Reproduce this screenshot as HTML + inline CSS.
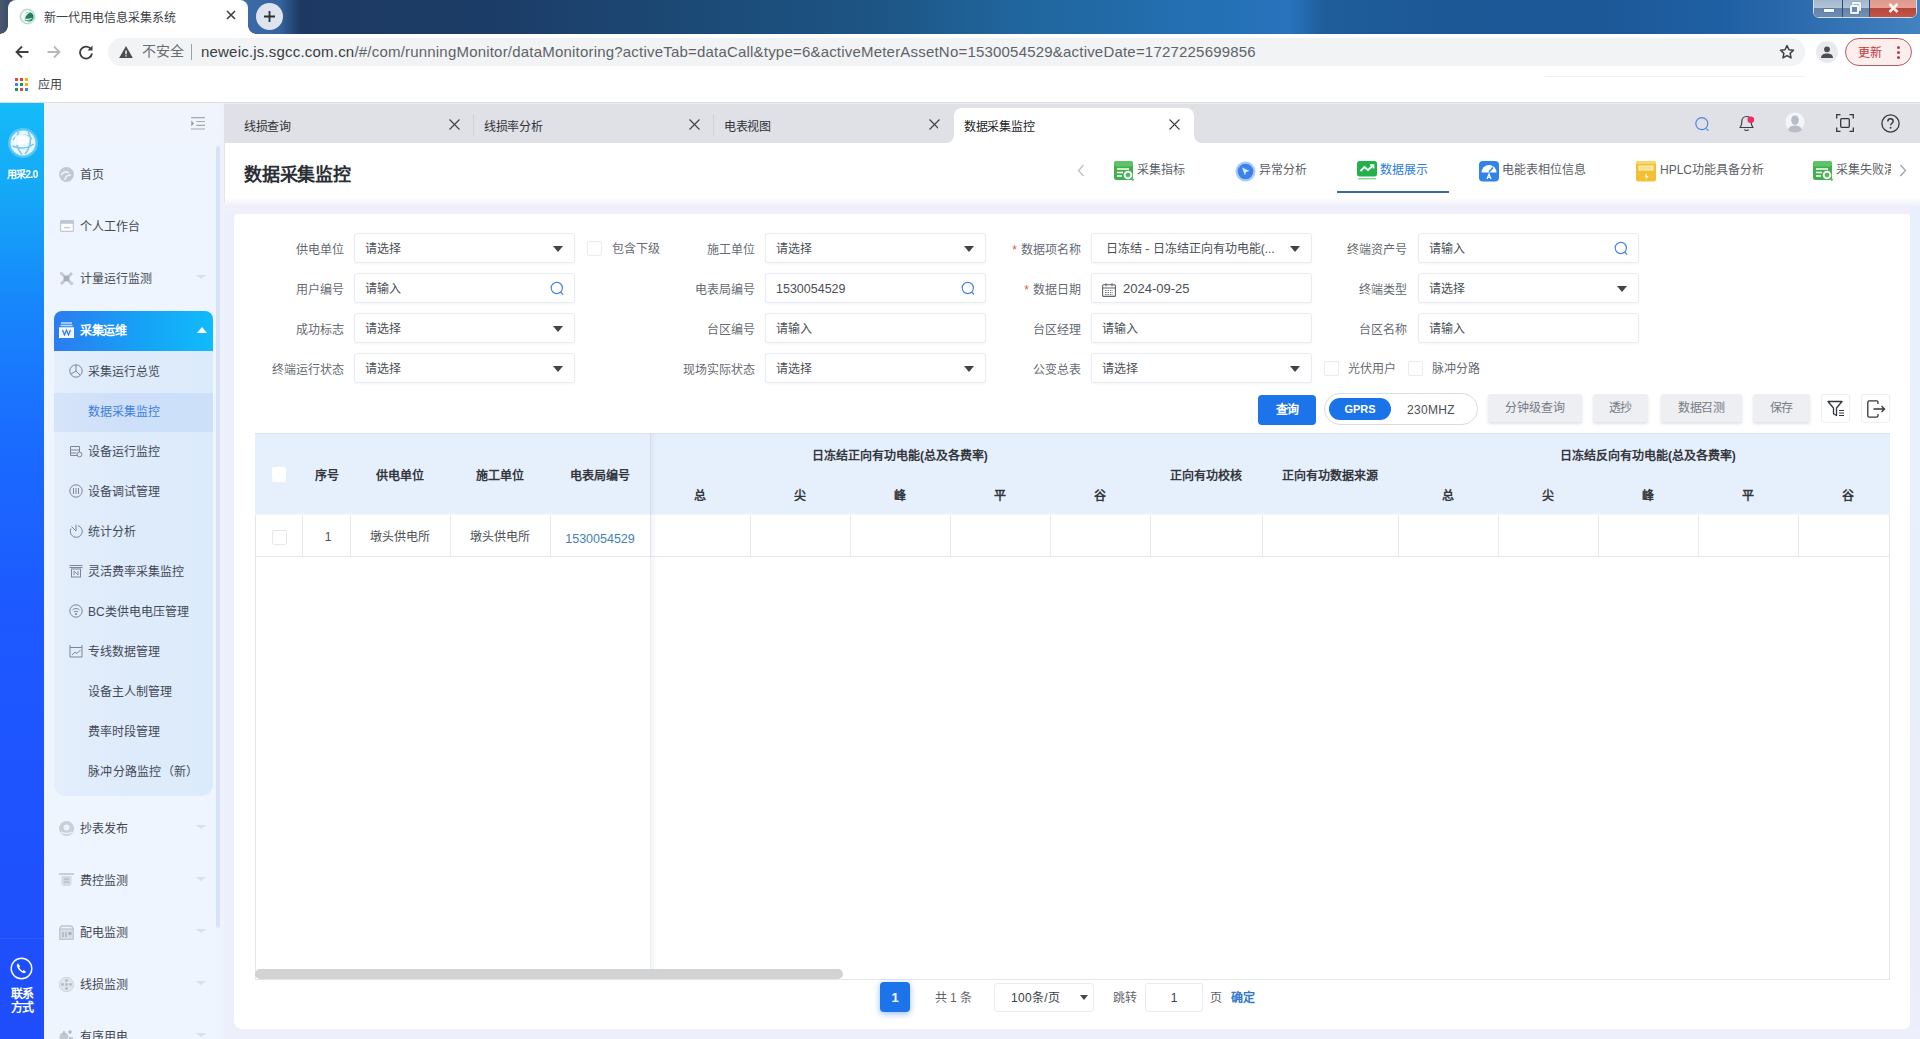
<!DOCTYPE html>
<html lang="zh-CN">
<head>
<meta charset="utf-8">
<title>新一代用电信息采集系统</title>
<style>
*{box-sizing:border-box;margin:0;padding:0}
body{position:absolute;left:0;top:0;line-height:1.2}
html,body{width:1920px;height:1039px;overflow:hidden;background:#fff;font-family:"Liberation Sans",sans-serif;font-size:12px;color:#4a4f57}
.abs{position:absolute}
#root{position:relative;width:1920px;height:1039px;overflow:hidden}
/* ---------- browser chrome ---------- */
#titlebar{left:0;top:0;width:1920px;height:34px;background:linear-gradient(90deg,#4a586e 0px,#3b4d6b 8px,#3c6aa6 250px,#35639e 280px,#1d3963 300px,#1b3c66 480px,#1c4672 640px,#1c4e7b 760px,#1d5585 880px,#20649b 1000px,#216aa6 1100px,#2470b4 1200px,#2873bc 1290px,#1e5d99 1325px,#1c5896 1450px,#1c5898 1600px,#1e5fa3 1720px,#2c6bad 1800px,#4282c0 1920px)}
#btab{left:8px;top:0;width:240px;height:34px;background:#fff;border-radius:8px 8px 0 0}
#btab .t{left:36px;top:11px;font-size:12px;color:#3c4043;white-space:nowrap;letter-spacing:0}
#newtab{left:256px;top:3px;width:27px;height:27px;border-radius:50%;background:#dde4ee}
#winctl{left:1813px;top:-1px;width:104px;height:19px;border:1px solid #d3deec;border-radius:0 0 6px 6px;overflow:hidden;background:#1d3357;box-shadow:0 0 0 1px rgba(20,40,80,.5) inset}
#addr{left:0;top:34px;width:1920px;height:34px;background:#fff}
#omni{left:108px;top:38px;width:1697px;height:28px;border-radius:14px;background:#f1f3f4}
#omni .u{left:93px;top:5px;font-size:15px;color:#5f6368;white-space:nowrap;letter-spacing:.2px}
#omni .u b{font-weight:normal;color:#3a3d42}
#bm{left:0;top:68px;width:1920px;height:34px;background:#fff}
/* ---------- app ---------- */
#rail{left:0;top:102px;width:44px;height:937px;background:linear-gradient(180deg,#14bcf8 0,#14a8f7 90px,#1787fb 200px,#1a6cff 330px,#1d58ff 520px,#1f4dfb 937px)}
#side{left:44px;top:102px;width:180px;height:937px;background:linear-gradient(180deg,#f1f4fb 0,#eff5fe 50px)}
#tabs{left:224px;top:102px;width:1696px;height:41px;background:#dfe1e6}
#head{left:224px;top:143px;width:1696px;height:60px;background:#fff}
#bg{left:224px;top:203px;width:1696px;height:836px;background:linear-gradient(180deg,#f0f1fa 0,#eff0fa 12px,#edeffb 40px)}
#card{left:234px;top:213.500px;width:1676px;height:815.500px;background:#fff;border-radius:4px 3px 6px 8px}

/* rail + side */
.lbl{left:0;width:44px;text-align:center;color:#fff;font-weight:bold;white-space:nowrap}
.mi{left:0;width:180px;height:20px}
.mi .tx{left:36px;top:4px;font-size:12px;color:#434954;white-space:nowrap;letter-spacing:0}
.mi .ar{left:152px;top:7px;width:0;height:0;border-left:5px solid transparent;border-right:5px solid transparent;border-top:4px solid #dadfea}
.si{left:10px;width:159px;height:40px}
.si .tx{left:34px;top:14px;font-size:12px;color:#434954;white-space:nowrap;letter-spacing:0}
.si svg{position:absolute;left:14.500px;top:13px}
/* tab strip */
.tb{top:18px;font-size:12px;color:#2f3237;white-space:nowrap;letter-spacing:-.3px}
.tx9{position:absolute;top:17px}
/* header nav */
.nv{top:20px;font-size:12px;color:#5b6068;white-space:nowrap;letter-spacing:0}

/* form */
.lb{width:120px;text-align:right;font-size:12px;color:#666b73;white-space:nowrap;letter-spacing:0;margin-top:1.5px;height:16px;line-height:16px}
.lb i{font-style:normal;color:#e5534b;margin-right:4px}
.ip{width:221px;height:30px;border:1px solid #e9ebf0;border-radius:3px;background:#fff;box-shadow:0 1px 2px rgba(120,130,160,.08)}
.ip .v{position:absolute;left:10px;top:7px;font-size:12px;color:#4b4f56;white-space:nowrap;letter-spacing:0;line-height:16px}
.ip .dn{position:absolute;right:11px;top:12px;width:0;height:0;border-left:5px solid transparent;border-right:5px solid transparent;border-top:6px solid #404349}
.ip .sr{position:absolute;right:9px;top:7px}
.cb{width:15px;height:15px;border:1px solid #e9ebf0;border-radius:2px;background:#fff}
.cl{font-size:12px;color:#666b73;white-space:nowrap;letter-spacing:0;margin-top:1px;line-height:16px}
.gb{top:394px;height:28px;border-radius:3px;background:#eeeff3;color:#767b84;font-size:12px;text-align:center;line-height:29px;letter-spacing:-.2px;box-shadow:0 2px 3px rgba(110,120,150,.22)}
.ib{top:394px;width:29px;height:29px;border:1px solid #eceef2;border-radius:3px;background:#fff}
/* table */
.th{font-size:12px;font-weight:bold;color:#33373d;white-space:nowrap;text-align:center;letter-spacing:-.05px;margin-top:.5px;line-height:16px}
.td{font-size:12px;color:#4b4f56;white-space:nowrap;text-align:center;letter-spacing:0;line-height:16px}
.vl{top:515px;width:1px;height:41px;background:#e7e9ed}
.pg{font-size:12px;color:#5f646c;white-space:nowrap;line-height:16px;letter-spacing:-.2px}
</style>
</head>
<body>
<div id="root">
<!-- ===== browser chrome ===== -->
<div id="titlebar" class="abs"></div>
<div class="abs" style="left:0;top:26px;width:8px;height:8px;background:radial-gradient(circle at 0 0,rgba(255,255,255,0) 7.500px,#fff 8px)"></div>
<div class="abs" style="left:248px;top:26px;width:8px;height:8px;background:radial-gradient(circle at 100% 0,rgba(255,255,255,0) 7.500px,#fff 8px)"></div>
<div id="btab" class="abs">
  <svg class="abs" style="left:11px;top:8px" width="17" height="17" viewBox="0 0 17 17"><circle cx="8.500" cy="8.500" r="8.200" fill="#dcefe9"/><circle cx="8.500" cy="8.500" r="7" fill="#f3faf7" stroke="#8cc9b8" stroke-width=".8"/><circle cx="9.800" cy="8.800" r="4.800" fill="#1f7d63"/><path d="M3 9.500c1.500-4 5-6 9-5-3 .5-5 2.500-6 6 2 .5 5 .3 7.500-1-1.500 3-6 4.500-10.500 0z" fill="#fff" opacity=".9"/><path d="M5.500 12c2.500 1 5.500.5 7.500-1.500" stroke="#57b39a" stroke-width=".9" fill="none"/></svg>
  <div class="abs t">新一代用电信息采集系统</div>
  <svg class="abs" style="left:218px;top:10px" width="10" height="10" viewBox="0 0 10 10"><path d="M1 1l8 8M9 1l-8 8" stroke="#3c4043" stroke-width="1.6"/></svg>
</div>
<div id="newtab" class="abs"><svg class="abs" style="left:7px;top:7px" width="13" height="13" viewBox="0 0 13 13"><path d="M6.500 1v11M1 6.500h11" stroke="#2b2f36" stroke-width="1.8"/></svg></div>
<div id="winctl" class="abs">
  <div class="abs" style="left:0;top:0;width:28px;height:17px;background:linear-gradient(180deg,#a3b7cf 0,#b3c4d8 46%,#6483a8 48%,#6f8db0 100%)"></div>
  <div class="abs" style="left:29px;top:0;width:26px;height:17px;background:linear-gradient(180deg,#a3b7cf 0,#b3c4d8 46%,#6483a8 48%,#7391b3 100%)"></div>
  <div class="abs" style="left:56px;top:0;width:46px;height:17px;background:linear-gradient(180deg,#de9a8f 0,#e5a294 46%,#b9443a 48%,#c4564a 100%)"></div>
  <div class="abs" style="left:28px;top:0;width:1px;height:17px;background:#2b4a74"></div>
  <div class="abs" style="left:55px;top:0;width:1px;height:17px;background:#2b4a74"></div>
  <div class="abs" style="left:10px;top:9px;width:10px;height:3px;background:#f4f8fc;box-shadow:0 0 1px #1b2c44"></div>
  <div class="abs" style="left:38px;top:2px;width:9px;height:9px;border:2px solid #f4f8fc;border-radius:1px;box-shadow:0 0 1px #1b2c44"></div>
  <div class="abs" style="left:36px;top:5px;width:9px;height:9px;border:2px solid #f4f8fc;border-radius:1px;background:#6b8ab0;box-shadow:0 0 1px #1b2c44"></div>
  <svg class="abs" style="left:74px;top:3px" width="11" height="10" viewBox="0 0 11 10"><path d="M1.500 1l8 8M9.500 1l-8 8" stroke="#fbf3ef" stroke-width="2.600"/></svg>
</div>
<div id="addr" class="abs">
  <svg class="abs" style="left:14px;top:10px" width="16" height="16" viewBox="0 0 16 16"><path d="M14.500 8H2.500M8 2.500L2.500 8 8 13.500" stroke="#3c4043" stroke-width="1.8" fill="none"/></svg>
  <svg class="abs" style="left:46px;top:10px" width="16" height="16" viewBox="0 0 16 16"><path d="M1.500 8h12M8 2.500L13.500 8 8 13.500" stroke="#b4b7bb" stroke-width="1.8" fill="none"/></svg>
  <svg class="abs" style="left:78px;top:10px" width="16" height="16" viewBox="0 0 16 16"><path d="M13.200 5.500A6 6 0 1 0 14 9.300" stroke="#3c4043" stroke-width="1.8" fill="none"/><path d="M14.500 1.500v5h-5z" fill="#3c4043"/></svg>
</div>
<div id="omni" class="abs">
  <svg class="abs" style="left:11px;top:8px" width="14" height="12.250" viewBox="0 0 16 14"><path d="M8 0l8 14H0z" fill="#4a4d52"/><path d="M7.200 5h1.600v4.500H7.200zM7.200 10.500h1.600v1.600H7.200z" fill="#fff"/></svg>
  <div class="abs" style="left:34px;top:5px;font-size:14px;color:#686b70;white-space:nowrap">不安全</div>
  <div class="abs" style="left:83px;top:6px;width:1px;height:16px;background:#9aa0a6"></div>
  <div class="abs u"><b>neweic.js.sgcc.com.cn</b>/#/com/runningMonitor/dataMonitoring?activeTab=dataCall&amp;type=6&amp;activeMeterAssetNo=1530054529&amp;activeDate=1727225699856</div>
  <svg class="abs" style="left:1671px;top:6px" width="16" height="16" viewBox="0 0 16 16"><path d="M8 1.600l1.950 4.200 4.550.5-3.400 3.100.95 4.500L8 11.600l-4.050 2.300.95-4.500-3.400-3.100 4.550-.5z" stroke="#3c4043" stroke-width="1.500" fill="none" stroke-linejoin="round"/></svg>
</div>
<div class="abs" style="left:1816px;top:41px;width:22px;height:22px;border-radius:50%;background:#e8eaed"><svg class="abs" style="left:4px;top:4px" width="14" height="14" viewBox="0 0 14 14"><circle cx="7" cy="4.300" r="2.900" fill="#4a4d52"/><path d="M1 13c0-3.500 3-4.600 6-4.600s6 1.100 6 4.600z" fill="#4a4d52"/></svg></div>
<div class="abs" style="left:1845px;top:38px;width:67px;height:28px;border-radius:14px;border:1px solid #b9595d;background:#fdeeee">
  <div class="abs" style="left:12px;top:6.500px;font-size:12px;color:#c0353a;white-space:nowrap">更新</div>
  <div class="abs" style="left:51px;top:7px;width:3px;height:3px;border-radius:50%;background:#b0404a;box-shadow:0 5px 0 #b0404a,0 10px 0 #b0404a"></div>
</div>
<div id="bm" class="abs">
  <svg class="abs" style="left:15px;top:10px" width="13" height="13" viewBox="0 0 13 13"><g><rect x="0" y="0" width="3" height="3" fill="#e8453c"/><rect x="5" y="0" width="3" height="3" fill="#e8453c"/><rect x="10" y="0" width="3" height="3" fill="#f4b400"/><rect x="0" y="5" width="3" height="3" fill="#4285f4"/><rect x="5" y="5" width="3" height="3" fill="#0f9d58"/><rect x="10" y="5" width="3" height="3" fill="#f4b400"/><rect x="0" y="10" width="3" height="3" fill="#0f9d58"/><rect x="5" y="10" width="3" height="3" fill="#e8453c"/><rect x="10" y="10" width="3" height="3" fill="#4285f4"/></g></svg>
  <div class="abs" style="left:38px;top:10px;font-size:12px;color:#3c4043;white-space:nowrap">应用</div>
  <div class="abs" style="left:1545px;top:8px;width:260px;height:1px;background:#eef0f2"></div>
</div>
<!-- ===== app ===== -->
<div class="abs" style="left:0;top:101.500px;width:1920px;height:1px;background:#dcdee2;z-index:5"></div>
<div id="rail" class="abs"></div>
<div id="side" class="abs"></div>
<div id="tabs" class="abs"></div>
<div id="head" class="abs"></div>
<div id="bg" class="abs"></div>
<div class="abs" style="left:224px;top:143px;width:1px;height:60px;background:#e3e4e9"></div>
<div class="abs" style="left:225px;top:198px;width:1695px;height:10px;background:linear-gradient(180deg,#fff 0,#f7f7fd 4px,#eeeffa 9px,#eff0fa 10px)"></div>
<div class="abs" style="left:1910px;top:207px;width:10px;height:822px;background:linear-gradient(180deg,#e9f0fd,#e9eefb 60%,#eceefa)"></div>
<div class="abs" style="left:224px;top:213px;width:10px;height:816px;background:#ebf0fc"></div>
<div id="card" class="abs"></div>

<!-- rail -->
<div class="abs" style="left:0;top:102px;width:44px;height:937px">
  <svg class="abs" style="left:7px;top:25px" width="32" height="32" viewBox="0 0 32 32"><circle cx="16" cy="16" r="15" fill="#8fd6f8" opacity=".55"/><circle cx="16" cy="16" r="12.500" fill="#e9f7fd"/><path d="M6 13c4-6 14-7 19-1M5.500 19c6 3 15 3 21-2M12 4.500c-4 7-3 16 3 23M21 5c4 6 3 15-3 22" stroke="#7fc6ee" stroke-width="1.600" fill="none"/><path d="M9 9c5-3 11-2 14 2-2 6-9 9-15 6-1-3-.5-6 1-8z" fill="#fff" opacity=".85"/></svg>
  <div class="abs lbl" style="top:67px;font-size:10px;letter-spacing:-.6px">用采2.0</div>
  <div class="abs" style="left:0;top:836px;width:44px;height:1px;background:#3a66ff;opacity:.6"></div>
  <svg class="abs" style="left:10px;top:855px" width="23" height="23" viewBox="0 0 23 23"><circle cx="11.500" cy="11.500" r="10.300" stroke="#fff" stroke-width="1.400" fill="none"/><path d="M8 6.500c-1.200.6-1.500 2-.8 3.600 1 2.300 3 4.500 5.300 5.600 1.600.7 2.900.4 3.500-.8l-2.200-1.800-1.300.9c-1.300-.7-2.600-2-3.300-3.400l.9-1.300z" fill="#fff"/></svg>
  <div class="abs lbl" style="top:886px;font-size:12px;line-height:13.500px;letter-spacing:-.5px">联系<br>方式</div>
</div>
<!-- side -->
<div class="abs" style="left:44px;top:102px;width:180px;height:937px;overflow:hidden">
  <div class="abs" style="left:172px;top:44px;width:4px;height:782px;border-radius:2px;background:#d9e3f8"></div>
  <div class="abs" style="left:176px;top:0;width:4px;height:937px;background:#edf2fd"></div>
  <svg class="abs" style="left:147px;top:14.500px" width="14" height="13" viewBox="0 0 14 13"><path d="M0 .7h14M5.300 4.500h8.700M5.300 8.300h8.700M0 12h14" stroke="#a3a8b3" stroke-width="1.200"/><path d="M.3 3.600l2.700 2.800-2.700 2.800z" fill="#8f949f"/></svg>
  <!-- top-level items -->
  <div class="abs mi" style="top:62px"><svg class="abs" style="left:15px;top:3px" width="15" height="15" viewBox="0 0 15 15"><circle cx="7.500" cy="7.500" r="7.500" fill="#c3c8d2"/><path d="M2 8c2-3 5-4 8-2M6 13c0-3 2-5 6-5" stroke="#eef1f6" stroke-width="1.500" fill="none"/></svg><div class="abs tx">首页</div></div>
  <div class="abs mi" style="top:114px"><svg class="abs" style="left:16px;top:4px" width="14" height="12" viewBox="0 0 14 12"><rect x=".6" y=".6" width="12.800" height="10.800" rx="1" fill="#fff" stroke="#c1c6d1" stroke-width="1.200"/><rect x=".6" y=".6" width="12.800" height="3.200" fill="#c1c6d1"/><path d="M4 7.600h6" stroke="#c1c6d1" stroke-width="1.400"/></svg><div class="abs tx">个人工作台</div></div>
  <div class="abs mi" style="top:166px"><svg class="abs" style="left:15px;top:3px" width="15" height="15" viewBox="0 0 15 15"><path d="M2 2l11 11M13 2L2 13" stroke="#bfc4cf" stroke-width="2.600"/><circle cx="7.500" cy="7.500" r="3" fill="#a8aebb"/><circle cx="2.500" cy="2.500" r="1.800" fill="#c9ced8"/><circle cx="12.500" cy="12.500" r="1.800" fill="#c9ced8"/></svg><div class="abs tx">计量运行监测</div><div class="abs ar"></div></div>
  <!-- active group -->
  <div class="abs" style="left:10px;top:249px;width:159px;height:445px;border-radius:0 0 12px 12px;background:linear-gradient(90deg,#e4eefc,#deebfb 50%,#dcebfb)"></div>
  <div class="abs" style="left:10px;top:291px;width:159px;height:39px;background:linear-gradient(90deg,#d6e4f9,#cee0f9 40%,#cde0f9)"></div>
  <div class="abs" style="left:10px;top:209px;width:159px;height:40px;border-radius:8px 8px 0 0;background:linear-gradient(90deg,#2b7cf0,#16a2f6 55%,#11bbfa)"></div>
  <svg class="abs" style="left:15px;top:220px" width="15" height="16" viewBox="0 0 15 16"><path d="M2 1h11M1.500 3.500h12" stroke="#bfe0fb" stroke-width="1.400"/><rect x=".7" y="6" width="13.600" height="9.300" fill="#e9f3fe" stroke="#fff" stroke-width="1.400"/><path d="M3.500 8l2 5 2-5 2 5 2-5" stroke="#2b7af0" stroke-width="1.200" fill="none"/></svg>
  <div class="abs" style="left:36px;top:222px;font-size:12px;font-weight:bold;color:#fff;white-space:nowrap;letter-spacing:-.5px">采集运维</div>
  <div class="abs" style="left:153px;top:225px;width:0;height:0;border-left:5px solid transparent;border-right:5px solid transparent;border-bottom:6px solid #fff"></div>
  <!-- sub items -->
  <div class="abs si" style="top:249px"><svg width="14" height="14" viewBox="0 0 14 14"><circle cx="7" cy="7" r="6.200" stroke="#7d8492" stroke-width="1" fill="none"/><path d="M7 7V1M7 7l-5 3M7 7l4 4" stroke="#7d8492" stroke-width="1" fill="none"/></svg><div class="abs tx">采集运行总览</div></div>
  <div class="abs si" style="top:289px"><div class="abs tx" style="color:#3b7fe0">数据采集监控</div></div>
  <div class="abs si" style="top:329px"><svg width="14" height="14" viewBox="0 0 14 14"><path d="M1.500 2.500h9v9h-9zM1.500 6h9M1.500 9h6" stroke="#7d8492" stroke-width="1" fill="none"/><circle cx="10.500" cy="10.500" r="2.400" stroke="#7d8492" fill="#dfebfb"/></svg><div class="abs tx">设备运行监控</div></div>
  <div class="abs si" style="top:369px"><svg width="14" height="14" viewBox="0 0 14 14"><circle cx="7" cy="7" r="6.200" stroke="#7d8492" stroke-width="1" fill="none"/><path d="M4.500 4v6M7 4v6M9.500 4v6" stroke="#7d8492" stroke-width="1"/></svg><div class="abs tx">设备调试管理</div></div>
  <div class="abs si" style="top:409px"><svg width="14" height="14" viewBox="0 0 14 14"><path d="M9 1.600A6 6 0 1 1 2 4.500" stroke="#7d8492" stroke-width="1" fill="none"/><path d="M7 7V.8M7 7L2.500 2.500" stroke="#7d8492" stroke-width="1"/></svg><div class="abs tx">统计分析</div></div>
  <div class="abs si" style="top:449px"><svg width="14" height="14" viewBox="0 0 14 14"><path d="M.5 1.500h13M.5 3.500h13" stroke="#7d8492" stroke-width="1.200"/><rect x="2.500" y="5" width="9" height="8" stroke="#7d8492" fill="none"/><path d="M5 11V7l4 4V7" stroke="#7d8492" stroke-width=".9" fill="none"/></svg><div class="abs tx">灵活费率采集监控</div></div>
  <div class="abs si" style="top:489px"><svg width="14" height="14" viewBox="0 0 14 14"><circle cx="7" cy="7" r="6.200" stroke="#7d8492" stroke-width="1" fill="none"/><path d="M3.500 6c2-2 5-2 7 0M5 8c1.200-1 2.800-1 4 0" stroke="#7d8492" fill="none"/><circle cx="7" cy="10" r="1" fill="#7d8492"/></svg><div class="abs tx">BC类供电电压管理</div></div>
  <div class="abs si" style="top:529px"><svg width="14" height="14" viewBox="0 0 14 14"><path d="M1 1v12h12V1" stroke="#7d8492" stroke-width="1" fill="none"/><path d="M1 3.500h12" stroke="#7d8492"/><path d="M3 11l3-3 2 1.500 3.500-3.500" stroke="#7d8492" fill="none"/></svg><div class="abs tx">专线数据管理</div></div>
  <div class="abs si" style="top:569px"><div class="abs tx">设备主人制管理</div></div>
  <div class="abs si" style="top:609px"><div class="abs tx">费率时段管理</div></div>
  <div class="abs si" style="top:649px"><div class="abs tx" style="letter-spacing:.3px">脉冲分路监控（新）</div></div>
  <!-- lower top-level items -->
  <div class="abs mi" style="top:716px"><svg class="abs" style="left:15px;top:3px" width="15" height="15" viewBox="0 0 15 15"><circle cx="7.500" cy="7.500" r="7.500" fill="#c9ced8"/><circle cx="7.500" cy="6.500" r="3" fill="#eef1f6"/><path d="M2 11c3 2 8 2 11 0" stroke="#eef1f6" stroke-width="1.500" fill="none"/></svg><div class="abs tx">抄表发布</div><div class="abs ar"></div></div>
  <div class="abs mi" style="top:768px"><svg class="abs" style="left:15px;top:3px" width="15" height="14" viewBox="0 0 15 14"><path d="M0 1h15" stroke="#bfc4cf" stroke-width="1.600"/><path d="M2.500 3h10v8l-2 2h-6l-2-2z" fill="#d5d9e1"/><path d="M5 6h5M5 9h5" stroke="#a8aebb"/></svg><div class="abs tx">费控监测</div><div class="abs ar"></div></div>
  <div class="abs mi" style="top:820px"><svg class="abs" style="left:15px;top:3px" width="15" height="15" viewBox="0 0 15 15"><path d="M1 4c0-2 1-3 3-3h7c2 0 3 1 3 3" stroke="#bfc4cf" stroke-width="1.300" fill="none"/><rect x=".7" y="4" width="13.600" height="10.300" fill="#d9dde5" stroke="#bfc4cf" stroke-width="1.200"/><path d="M4 7v5M7 7v5" stroke="#a8aebb" stroke-width="1.300"/><rect x="9.500" y="7" width="3" height="3" fill="#a8aebb"/></svg><div class="abs tx">配电监测</div><div class="abs ar"></div></div>
  <div class="abs mi" style="top:872px"><svg class="abs" style="left:15px;top:3px" width="15" height="15" viewBox="0 0 15 15"><circle cx="7.500" cy="7.500" r="7.200" fill="#e1e5ec" stroke="#cfd4dd"/><circle cx="7.500" cy="3.500" r="1.400" fill="#b4bac6"/><circle cx="7.500" cy="11.500" r="1.400" fill="#b4bac6"/><circle cx="3.500" cy="7.500" r="1.400" fill="#b4bac6"/><circle cx="11.500" cy="7.500" r="1.400" fill="#b4bac6"/><circle cx="7.500" cy="7.500" r="1.400" fill="#b4bac6"/></svg><div class="abs tx">线损监测</div><div class="abs ar"></div></div>
  <div class="abs mi" style="top:924px"><svg class="abs" style="left:15px;top:3px" width="15" height="15" viewBox="0 0 15 15"><circle cx="5" cy="8" r="4.500" fill="#c3c8d2"/><path d="M5 2v4M11 1v4M9 3h4M10 9h4" stroke="#b4bac6" stroke-width="1.500"/></svg><div class="abs tx">有序用电</div><div class="abs ar"></div></div>
</div>

<!-- tab strip -->
<div class="abs" style="left:224px;top:102px;width:1696px;height:41px">
  <div class="abs" style="left:0;top:0;width:1696px;height:2px;background:#e9ebee"></div>
  <div class="abs tb" style="left:20px">线损查询</div>
  <svg class="tx9" style="left:225px" width="11" height="11" viewBox="0 0 11 11"><path d="M.5.5l10 10M10.500.5l-10 10" stroke="#3c4043" stroke-width="1.100"/></svg>
  <div class="abs" style="left:249px;top:12px;width:1px;height:22px;background:#cfd2d8"></div>
  <div class="abs tb" style="left:260px">线损率分析</div>
  <svg class="tx9" style="left:465px" width="11" height="11" viewBox="0 0 11 11"><path d="M.5.5l10 10M10.500.5l-10 10" stroke="#3c4043" stroke-width="1.100"/></svg>
  <div class="abs" style="left:489px;top:12px;width:1px;height:22px;background:#cfd2d8"></div>
  <div class="abs tb" style="left:500px">电表视图</div>
  <svg class="tx9" style="left:705px" width="11" height="11" viewBox="0 0 11 11"><path d="M.5.5l10 10M10.500.5l-10 10" stroke="#3c4043" stroke-width="1.100"/></svg>
  <!-- active tab -->
  <div class="abs" style="left:722px;top:33px;width:16px;height:8px;background:#fff"></div>
  <div class="abs" style="left:714px;top:25px;width:16px;height:16px;border-radius:0 0 8px 0;background:#dfe1e6"></div>
  <div class="abs" style="left:962px;top:33px;width:16px;height:8px;background:#fff"></div>
  <div class="abs" style="left:970px;top:25px;width:16px;height:16px;border-radius:0 0 0 8px;background:#dfe1e6"></div>
  <div class="abs" style="left:730px;top:6px;width:240px;height:35px;border-radius:8px 8px 0 0;background:#fff"></div>
  <div class="abs tb" style="left:740px;color:#202226">数据采集监控</div>
  <svg class="tx9" style="left:945px" width="11" height="11" viewBox="0 0 11 11"><path d="M.5.5l10 10M10.500.5l-10 10" stroke="#3c4043" stroke-width="1.100"/></svg>
  <!-- right icons -->
  <svg class="abs" style="left:1470px;top:14px" width="17" height="17" viewBox="0 0 17 17"><circle cx="7.800" cy="7.600" r="6" stroke="#4a83e0" stroke-width="1.150" fill="none"/><path d="M12.300 12.600l2.200 2" stroke="#4a83e0" stroke-width="1.150"/></svg>
  <svg class="abs" style="left:1513px;top:11px" width="20" height="20" viewBox="0 0 20 20"><path d="M3 14.500h13c-1.500-1.500-1.800-3-1.800-6 0-3-2-5-4.700-5S4.800 5.500 4.800 8.500c0 3-.3 4.500-1.800 6z" stroke="#3a3d42" stroke-width="1.200" fill="none" stroke-linejoin="round"/><path d="M7.500 16.500c.5 1.300 3.500 1.300 4 0" stroke="#3a3d42" stroke-width="1.200" fill="none"/><circle cx="13.800" cy="6.800" r="3.300" fill="#ec2d62"/></svg>
  <svg class="abs" style="left:1561px;top:10px" width="20" height="21.800" viewBox="0 0 22 24"><circle cx="11" cy="11" r="10.500" fill="#f4f5f7"/><ellipse cx="11" cy="9" rx="4.200" ry="5.200" fill="#b8bcc4"/><path d="M3.500 19.500c1.500-3.500 4-4.500 7.500-4.500s6 1 7.500 4.500c-2 2.500-5 3-7.500 3s-5.500-.5-7.500-3z" fill="#b8bcc4"/></svg>
  <svg class="abs" style="left:1612px;top:12px" width="18" height="18" viewBox="0 0 18 18"><path d="M.7 4.500V.7h3.800M13.500.7h3.800v3.800M17.300 13.500v3.800h-3.800M4.500 17.300H.7v-3.800" stroke="#33363b" stroke-width="1.300" fill="none"/><rect x="4.700" y="4.700" width="8.600" height="8.600" rx="1" stroke="#33363b" stroke-width="1.300" fill="none"/></svg>
  <svg class="abs" style="left:1657px;top:12px" width="19" height="19" viewBox="0 0 19 19"><circle cx="9.500" cy="9.500" r="8.600" stroke="#33363b" stroke-width="1.300" fill="none"/><path d="M6.800 7.500c0-1.700 1.200-2.700 2.700-2.700s2.700 1 2.700 2.500c0 1.800-2.500 2-2.500 4" stroke="#33363b" stroke-width="1.400" fill="none"/><circle cx="9.600" cy="13.700" r=".95" fill="#33363b"/></svg>
</div>
<!-- header -->
<div class="abs" style="left:224px;top:143px;width:1696px;height:60px">
  <div class="abs" style="left:20px;top:22px;font-size:18px;font-weight:bold;color:#2a2e35;white-space:nowrap;letter-spacing:-.2px">数据采集监控</div>
  <svg class="abs" style="left:853px;top:21px" width="8" height="13" viewBox="0 0 8 13"><path d="M6.500 1L1.500 6.500l5 5.500" stroke="#b7bcc6" stroke-width="1.200" fill="none"/></svg>
  <!-- 采集指标 -->
  <svg class="abs" style="left:890px;top:18px" width="21" height="21" viewBox="0 0 21 21"><rect x="0" y="0" width="19" height="19" rx="2.500" fill="#45ae4e"/><rect x="0" y="0" width="19" height="5.500" rx="2.500" fill="#5fc468"/><path d="M3 8h12M3 11.500h6M3 15h5" stroke="#fff" stroke-width="1.700"/><circle cx="14" cy="14" r="3.600" fill="#e8f7ea" stroke="#fff" stroke-width="1.500"/><circle cx="14" cy="14" r="2.300" fill="#52b85f"/><path d="M16.800 16.800l2.700 2.700" stroke="#58c065" stroke-width="2"/></svg>
  <div class="abs nv" style="left:913px">采集指标</div>
  <!-- 异常分析 -->
  <svg class="abs" style="left:1011px;top:18px" width="21" height="21" viewBox="0 0 21 21"><circle cx="10.500" cy="10.500" r="10" fill="#a9c9f5"/><circle cx="10.500" cy="10.500" r="7.800" fill="#3b82ea"/><path d="M7 6.500l7.500 3.500-3.500 1-1 3.500z" fill="#dcebff"/></svg>
  <div class="abs nv" style="left:1035px">异常分析</div>
  <!-- 数据展示 active -->
  <svg class="abs" style="left:1133px;top:18px" width="21" height="19" viewBox="0 0 21 19"><rect x="0" y="0" width="20" height="15.500" rx="2.500" fill="#22b14c"/><path d="M3.500 10l4-4 3.500 3 5-4.500" stroke="#fff" stroke-width="1.800" fill="none"/><path d="M13 4h3.500v3.500" stroke="#fff" stroke-width="1.600" fill="none"/><path d="M1 17.700h18" stroke="#7fd892" stroke-width="1.400"/></svg>
  <div class="abs nv" style="left:1156px;color:#2a7be0">数据展示</div>
  <div class="abs" style="left:1113px;top:47.500px;width:112px;height:2px;background:#386ba6"></div>
  <!-- 电能表相位信息 -->
  <svg class="abs" style="left:1255px;top:18px" width="21" height="21" viewBox="0 0 21 21"><rect x="0" y="0" width="20" height="20.500" rx="4" fill="#2f83ea"/><path d="M2.500 11.500a7.500 7.500 0 0 1 15 0z" fill="#fff"/><path d="M10 11l4-4.500" stroke="#2f83ea" stroke-width="1.500"/><path d="M8 18l2-5 2 5M8.800 16.300h2.400" stroke="#fff" stroke-width="1.200" fill="none"/></svg>
  <div class="abs nv" style="left:1278px">电能表相位信息</div>
  <!-- HPLC -->
  <svg class="abs" style="left:1412px;top:18px" width="21" height="21" viewBox="0 0 21 21"><rect x="0" y="0" width="20" height="20.500" rx="2.500" fill="#f3c033"/><rect x="0" y="0" width="20" height="3" rx="1.500" fill="#f9d56a"/><rect x="3" y="5" width="14" height="4" fill="#fbe08a" stroke="#fdf0c0" stroke-width="1"/><path d="M11 12l-2.500 3.500h2L9.500 19l3-4h-2z" fill="#fff"/></svg>
  <div class="abs nv" style="left:1436px">HPLC功能具备分析</div>
  <!-- 采集失败 -->
  <svg class="abs" style="left:1589px;top:18px" width="21" height="21" viewBox="0 0 21 21"><rect x="0" y="0" width="19" height="19" rx="2.500" fill="#45ae4e"/><rect x="0" y="0" width="19" height="5.500" rx="2.500" fill="#5fc468"/><path d="M3 8h12M3 11.500h6M3 15h5" stroke="#fff" stroke-width="1.700"/><circle cx="14" cy="14" r="3.600" fill="#e8f7ea" stroke="#fff" stroke-width="1.500"/><circle cx="14" cy="14" r="2.300" fill="#52b85f"/><path d="M16.800 16.800l2.700 2.700" stroke="#58c065" stroke-width="2"/></svg>
  <div class="abs nv" style="left:1612px;width:55px;overflow:hidden">采集失败清单</div>
  <svg class="abs" style="left:1675px;top:21px" width="8" height="13" viewBox="0 0 8 13"><path d="M1.500 1l5 5.500-5 5.500" stroke="#9aa0aa" stroke-width="1.200" fill="none"/></svg>
</div>
<!-- form -->
<div class="abs lb" style="left:224px;top:240px">供电单位</div>
<div class="abs ip" style="left:354px;top:233px"><div class="v">请选择</div><div class="dn"></div></div>
<div class="abs lb" style="left:635px;top:240px">施工单位</div>
<div class="abs ip" style="left:765px;top:233px"><div class="v">请选择</div><div class="dn"></div></div>
<div class="abs lb" style="left:961px;top:240px"><i>*</i>数据项名称</div>
<div class="abs ip" style="left:1091px;top:233px"><div class="v" style="left:14px;letter-spacing:0">日冻结 - 日冻结正向有功电能(...</div><div class="dn"></div></div>
<div class="abs lb" style="left:1287px;top:240px">终端资产号</div>
<div class="abs ip" style="left:1418px;top:233px"><div class="v">请输入</div><svg class="sr" width="16" height="16" viewBox="0 0 16 16"><circle cx="7.800" cy="7" r="5.600" stroke="#4a84dc" stroke-width="1.200" fill="none"/><path d="M11.900 11.200l2.200 2.300" stroke="#4a84dc" stroke-width="1.200"/></svg></div>
<div class="abs lb" style="left:224px;top:280px">用户编号</div>
<div class="abs ip" style="left:354px;top:273px"><div class="v">请输入</div><svg class="sr" width="16" height="16" viewBox="0 0 16 16"><circle cx="7.800" cy="7" r="5.600" stroke="#4a84dc" stroke-width="1.200" fill="none"/><path d="M11.900 11.200l2.200 2.300" stroke="#4a84dc" stroke-width="1.200"/></svg></div>
<div class="abs lb" style="left:635px;top:280px">电表局编号</div>
<div class="abs ip" style="left:765px;top:273px"><div class="v" style="letter-spacing:0;font-size:12.500px">1530054529</div><svg class="sr" width="16" height="16" viewBox="0 0 16 16"><circle cx="7.800" cy="7" r="5.600" stroke="#4a84dc" stroke-width="1.200" fill="none"/><path d="M11.900 11.200l2.200 2.300" stroke="#4a84dc" stroke-width="1.200"/></svg></div>
<div class="abs lb" style="left:961px;top:280px"><i>*</i>数据日期</div>
<div class="abs ip" style="left:1091px;top:273px"><svg style="position:absolute;left:10px;top:9px" width="14" height="14" viewBox="0 0 14 14"><rect x=".6" y="1.800" width="12.800" height="11.600" rx="1" stroke="#5f646c" stroke-width="1.100" fill="none"/><path d="M.6 5h12.800M4 .3v3M10 .3v3" stroke="#5f646c" stroke-width="1.100"/><path d="M3 7.500h8M3 9.500h8M3 11.500h8" stroke="#5f646c" stroke-width=".9" stroke-dasharray="1.400 1.100"/></svg><div class="v" style="left:31px;font-size:13px;letter-spacing:0">2024-09-25</div></div>
<div class="abs lb" style="left:1287px;top:280px">终端类型</div>
<div class="abs ip" style="left:1418px;top:273px"><div class="v">请选择</div><div class="dn"></div></div>
<div class="abs lb" style="left:224px;top:320px">成功标志</div>
<div class="abs ip" style="left:354px;top:313px"><div class="v">请选择</div><div class="dn"></div></div>
<div class="abs lb" style="left:635px;top:320px">台区编号</div>
<div class="abs ip" style="left:765px;top:313px"><div class="v">请输入</div></div>
<div class="abs lb" style="left:961px;top:320px">台区经理</div>
<div class="abs ip" style="left:1091px;top:313px"><div class="v">请输入</div></div>
<div class="abs lb" style="left:1287px;top:320px">台区名称</div>
<div class="abs ip" style="left:1418px;top:313px"><div class="v">请输入</div></div>
<div class="abs lb" style="left:224px;top:360px">终端运行状态</div>
<div class="abs ip" style="left:354px;top:353px"><div class="v">请选择</div><div class="dn"></div></div>
<div class="abs lb" style="left:635px;top:360px">现场实际状态</div>
<div class="abs ip" style="left:765px;top:353px"><div class="v">请选择</div><div class="dn"></div></div>
<div class="abs lb" style="left:961px;top:360px">公变总表</div>
<div class="abs ip" style="left:1091px;top:353px"><div class="v">请选择</div><div class="dn"></div></div>
<div class="abs cb" style="left:587px;top:241px"></div><div class="abs cl" style="left:612px;top:240px">包含下级</div>
<div class="abs cb" style="left:1324px;top:361px"></div><div class="abs cl" style="left:1348px;top:360px">光伏用户</div>
<div class="abs cb" style="left:1408px;top:361px"></div><div class="abs cl" style="left:1432px;top:360px">脉冲分路</div>
<!-- buttons -->
<div class="abs" style="left:1258px;top:395px;width:58px;height:30px;border-radius:4px;background:#1d74ea;color:#fff;font-size:12px;font-weight:bold;text-align:center;line-height:31px;letter-spacing:-.5px">查询</div>
<div class="abs" style="left:1324px;top:393px;width:154px;height:32px;border:1px solid #d9dce3;border-radius:16px;background:#fff"></div>
<div class="abs" style="left:1329px;top:398px;width:62px;height:22px;border-radius:11px;background:#1a73e8;color:#fff;font-size:11px;font-weight:bold;text-align:center;line-height:23px">GPRS</div>
<div class="abs" style="left:1407px;top:402px;font-size:12px;color:#4b4f56;line-height:16px;white-space:nowrap;letter-spacing:.3px">230MHZ</div>
<div class="abs gb" style="left:1488px;width:94px">分钟级查询</div>
<div class="abs gb" style="left:1593px;width:55px">透抄</div>
<div class="abs gb" style="left:1661px;width:81px">数据召测</div>
<div class="abs gb" style="left:1753px;width:57px">保存</div>
<div class="abs ib" style="left:1821px"><svg style="position:absolute;left:5px;top:5px" width="18" height="18" viewBox="0 0 18 18"><path d="M1 1.500h14l-5.500 6.500v7.500l-3-1.800V8z" stroke="#33363b" stroke-width="1.300" fill="none" stroke-linejoin="round"/><path d="M12 10.500h5M12 13h5M12 15.500h5" stroke="#33363b" stroke-width="1.100"/></svg></div>
<div class="abs ib" style="left:1861px"><svg style="position:absolute;left:5px;top:5px" width="19" height="18" viewBox="0 0 19 18"><path d="M11 4V2.200c0-.8-.5-1.400-1.400-1.400H2.200C1.300.8.800 1.400.800 2.200v13.600c0 .8.500 1.400 1.400 1.400h7.400c.9 0 1.400-.6 1.400-1.400V14" stroke="#33363b" stroke-width="1.300" fill="none"/><path d="M6.500 9h11M14.500 6l3 3-3 3" stroke="#33363b" stroke-width="1.300" fill="none"/></svg></div>
<!-- table -->
<div class="abs" style="left:255px;top:433px;width:1635px;height:547px;border:1px solid #e3e6eb;border-top:none;background:#fff"></div>
<div class="abs" style="left:255px;top:433px;width:1635px;height:82px;background:linear-gradient(180deg,#e6effc 0,#e6effc 79px,#eef3fc 81px,#f6f8fd 82px)"></div>
<div class="abs" style="left:255px;top:433px;width:1635px;height:1px;background:#dbe3f1"></div>
<div class="abs" style="left:272px;top:467px;width:14px;height:15px;border-radius:2px;background:#fff"></div>
<div class="abs th" style="left:257px;top:467px;width:140px">序号</div>
<div class="abs th" style="left:330px;top:467px;width:140px">供电单位</div>
<div class="abs th" style="left:430px;top:467px;width:140px">施工单位</div>
<div class="abs th" style="left:530px;top:467px;width:140px">电表局编号</div>
<div class="abs th" style="left:1136px;top:467px;width:140px">正向有功校核</div>
<div class="abs th" style="left:1260px;top:467px;width:140px">正向有功数据来源</div>
<div class="abs th" style="left:750px;top:447px;width:300px">日冻结正向有功电能(总及各费率)</div>
<div class="abs th" style="left:1498px;top:447px;width:300px">日冻结反向有功电能(总及各费率)</div>
<div class="abs th" style="left:630px;top:487px;width:140px">总</div>
<div class="abs th" style="left:730px;top:487px;width:140px">尖</div>
<div class="abs th" style="left:830px;top:487px;width:140px">峰</div>
<div class="abs th" style="left:930px;top:487px;width:140px">平</div>
<div class="abs th" style="left:1030px;top:487px;width:140px">谷</div>
<div class="abs th" style="left:1378px;top:487px;width:140px">总</div>
<div class="abs th" style="left:1478px;top:487px;width:140px">尖</div>
<div class="abs th" style="left:1578px;top:487px;width:140px">峰</div>
<div class="abs th" style="left:1678px;top:487px;width:140px">平</div>
<div class="abs th" style="left:1778px;top:487px;width:140px">谷</div>
<div class="abs" style="left:255px;top:556px;width:1635px;height:1px;background:#e3e6eb"></div>
<div class="abs vl" style="left:302px"></div>
<div class="abs vl" style="left:350px"></div>
<div class="abs vl" style="left:450px"></div>
<div class="abs vl" style="left:550px"></div>
<div class="abs vl" style="left:750px"></div>
<div class="abs vl" style="left:850px"></div>
<div class="abs vl" style="left:950px"></div>
<div class="abs vl" style="left:1050px"></div>
<div class="abs vl" style="left:1150px"></div>
<div class="abs vl" style="left:1262px"></div>
<div class="abs vl" style="left:1398px"></div>
<div class="abs vl" style="left:1498px"></div>
<div class="abs vl" style="left:1598px"></div>
<div class="abs vl" style="left:1698px"></div>
<div class="abs vl" style="left:1798px"></div>
<div class="abs" style="left:272px;top:530px;width:15px;height:15px;border:1px solid #e6e8ec;border-radius:2px;background:#fff"></div>
<div class="abs td" style="left:278px;top:529px;width:100px;letter-spacing:0">1</div>
<div class="abs td" style="left:350px;top:529px;width:100px;">墩头供电所</div>
<div class="abs td" style="left:450px;top:529px;width:100px;">墩头供电所</div>
<div class="abs td" style="left:550px;top:531px;width:100px;color:#4480ba;font-size:12.500px;letter-spacing:0">1530054529</div>
<div class="abs" style="left:651px;top:433px;width:6px;height:536px;background:linear-gradient(90deg,rgba(150,160,195,.11),rgba(150,160,195,0))"></div>
<div class="abs" style="left:650px;top:433px;width:1px;height:123px;background:rgba(190,195,212,.42)"></div><div class="abs" style="left:650px;top:556px;width:1px;height:413px;background:rgba(190,195,212,.26)"></div>
<div class="abs" style="left:255px;top:969px;width:588px;height:10px;border-radius:5px;background:#d2d3d5"></div>
<!-- pagination -->
<div class="abs" style="left:880px;top:982px;width:30px;height:29.500px;border-radius:4px;background:#1d74ea;color:#fff;font-weight:bold;font-size:13px;text-align:center;line-height:31px;box-shadow:0 2px 6px rgba(26,115,232,.45)">1</div>
<div class="abs pg" style="left:935px;top:990px">共 1 条</div>
<div class="abs" style="left:994px;top:983px;width:100px;height:28.500px;border:1px solid #e9ebf0;border-radius:3px;background:#fff"><div class="abs pg" style="left:16px;top:6px;color:#3a3e45;letter-spacing:.3px">100条/页</div><div class="abs" style="left:85px;top:11px;width:0;height:0;border-left:4px solid transparent;border-right:4px solid transparent;border-top:5px solid #44474d"></div></div>
<div class="abs pg" style="left:1113px;top:990px">跳转</div>
<div class="abs" style="left:1145px;top:983px;width:58px;height:28.500px;border:1px solid #e9ebf0;border-radius:3px;background:#fff"><div class="abs pg" style="left:0;top:6px;width:56px;text-align:center;color:#3a3e45">1</div></div>
<div class="abs pg" style="left:1210px;top:990px">页</div>
<div class="abs pg" style="left:1231px;top:990px;color:#3577c8;font-weight:bold;letter-spacing:-.5px">确定</div>
<!--SECTIONS-->
</div>
</body>
</html>
